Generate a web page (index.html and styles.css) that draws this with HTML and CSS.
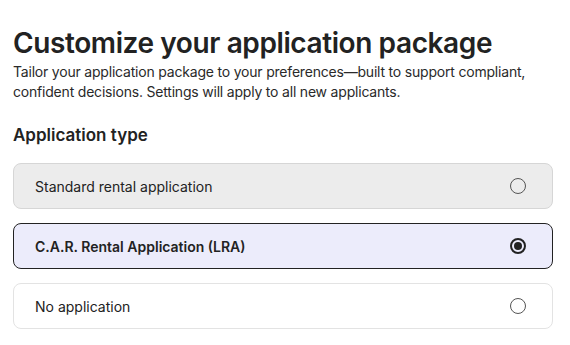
FILE: index.html
```html
<!DOCTYPE html>
<html lang="en">
<head>
    <meta charset="UTF-8">
    <meta name="viewport" content="width=device-width, initial-scale=1.0">
    <title>Customize your application package</title>
    <link rel="stylesheet" href="styles.css">
</head>
<body>
    <div class="page">
        <h1 class="title">Customize your application package</h1>
        <p class="subtitle">Tailor your application package to your preferences—built to support compliant, confident decisions. Settings will apply to all new applicants.</p>

        <h2 class="section-title">Application type</h2>
        <div class="options">
            <label class="option disabled">
                <span class="option-label">Standard rental application</span>
                <span class="radio"></span>
            </label>
            <label class="option selected">
                <span class="option-label">C.A.R. Rental Application (LRA)</span>
                <span class="radio checked"></span>
            </label>
            <label class="option">
                <span class="option-label">No application</span>
                <span class="radio"></span>
            </label>
        </div>
    </div>
</body>
</html>
```

FILE: styles.css
```css
body {
    margin: 0;
    font-family: 'Inter', 'Noto Sans', sans-serif;
    color: #222;
    background-color: #fff;
}
.page {
    padding: 26px 17px 0 13px;
}
.title {
    font-size: 28px;
    font-weight: 600;
    line-height: 34px;
    margin: 0;
    letter-spacing: -0.4px;
}
.subtitle {
    font-size: 14px;
    line-height: 20px;
    margin: 2px 0 0;
    letter-spacing: -0.2px;
    color: #2a2a2a;
}
.section-title {
    font-size: 17px;
    font-weight: 600;
    line-height: 24px;
    margin: 21px 0 16px;
}
.options {
    display: flex;
    flex-direction: column;
    gap: 14px;
}
.option {
    display: flex;
    align-items: center;
    justify-content: space-between;
    height: 46px;
    box-sizing: border-box;
    padding: 0 26px 0 21px;
    border: 1px solid #e3e3e3;
    border-radius: 8px;
    background-color: #fff;
    font-size: 14px;
}
.option.disabled {
    background-color: #ececec;
    border-color: #d6d6d6;
}
.option.selected {
    background-color: #ececfb;
    border-color: #222;
    font-weight: 600;
}
.radio {
    width: 16px;
    height: 16px;
    box-sizing: border-box;
    border: 1.5px solid #555;
    border-radius: 50%;
    display: flex;
    align-items: center;
    justify-content: center;
}
.radio.checked {
    border: 2px solid #222;
}
.radio.checked::after {
    content: '';
    width: 8px;
    height: 8px;
    border-radius: 50%;
    background-color: #222;
}
```
